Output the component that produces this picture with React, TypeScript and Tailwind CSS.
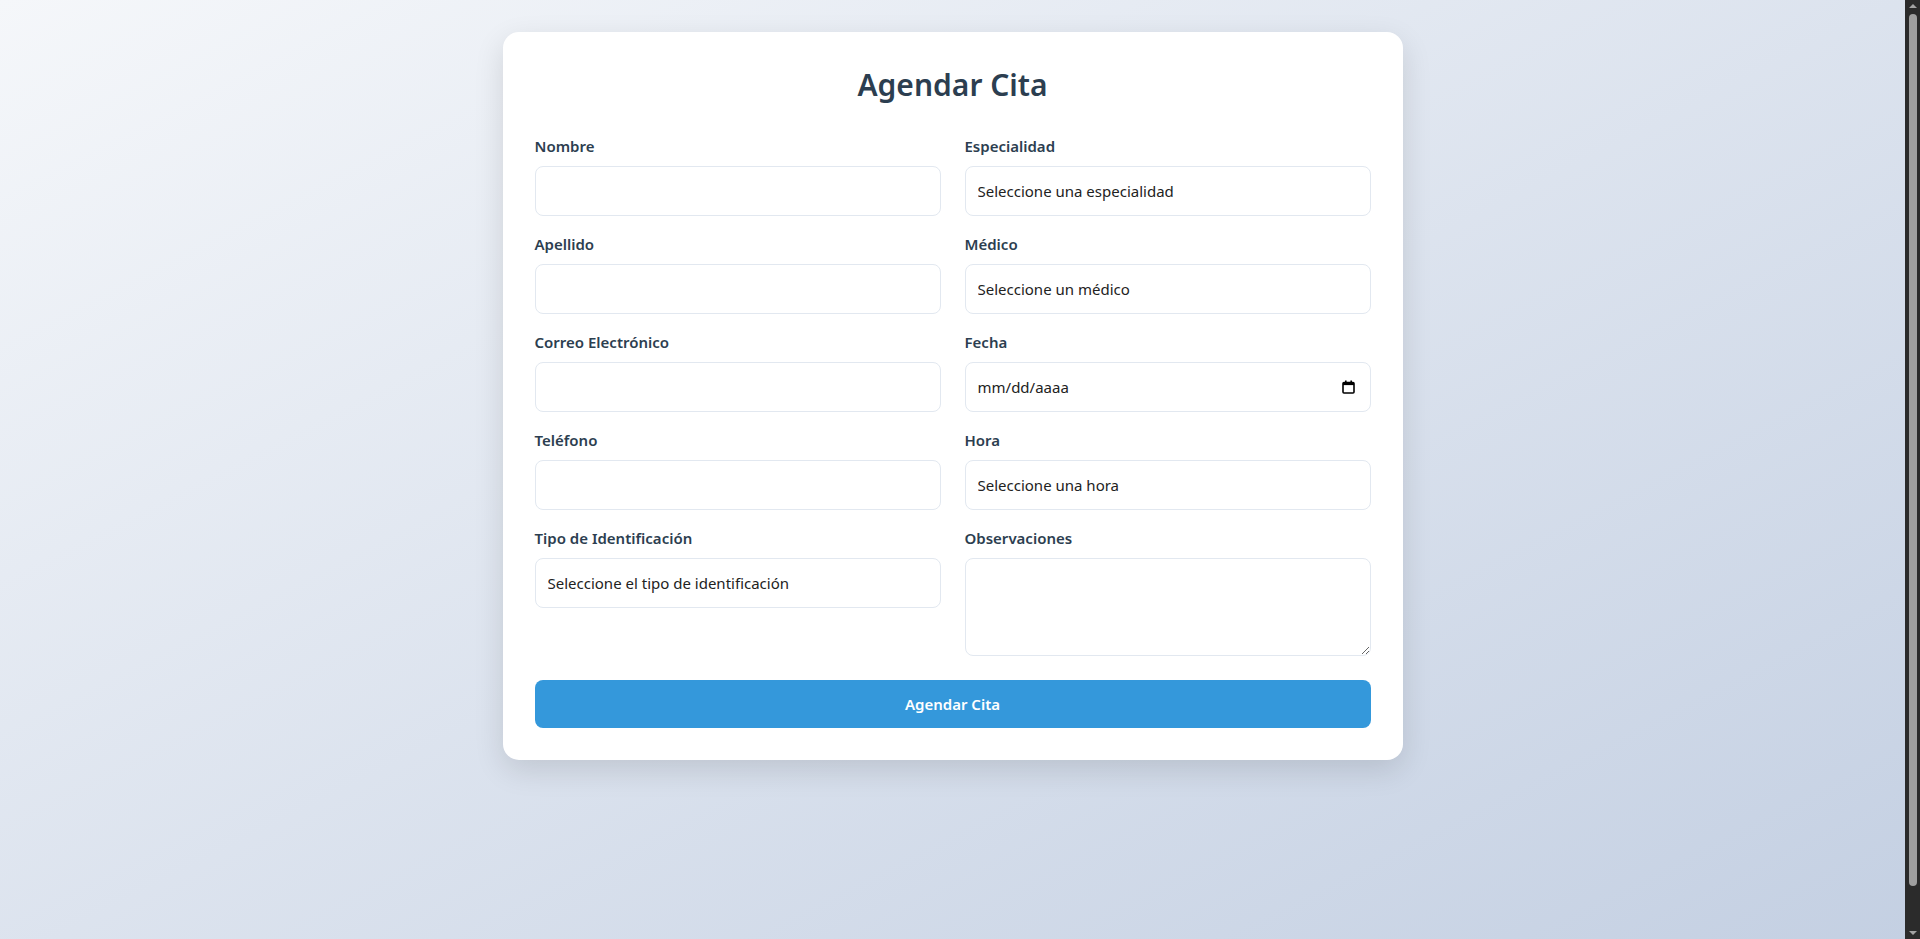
import { useState } from 'react';

const leftFields = [
  { id: 'nombre', label: 'Nombre', type: 'text' },
  { id: 'apellido', label: 'Apellido', type: 'text' },
  { id: 'email', label: 'Correo Electrónico', type: 'email' },
  { id: 'telefono', label: 'Teléfono', type: 'tel' },
];

const inputClass =
  'w-full h-[50px] px-3 rounded-lg border border-[#e2e8f0] bg-white text-[15px] text-[#222] outline-none focus:border-[#3498db]';

const CalendarIcon = () => (
  <svg width="13" height="14" viewBox="0 0 13 14" fill="none" className="text-black">
    <rect x="1" y="2.5" width="11" height="10.5" rx="1" stroke="currentColor" strokeWidth="1.6" />
    <rect x="1" y="2.5" width="11" height="2.6" fill="currentColor" />
    <rect x="3" y="0.5" width="1.6" height="2.5" fill="currentColor" />
    <rect x="8.4" y="0.5" width="1.6" height="2.5" fill="currentColor" />
  </svg>
);

const Field = ({ label, htmlFor, children }: { label: string; htmlFor: string; children: React.ReactNode }) => (
  <div className="flex flex-col">
    <label htmlFor={htmlFor} className="block h-[20px] leading-[20px] mb-[10px] text-[15px] font-semibold text-[#2c3e50]">
      {label}
    </label>
    {children}
  </div>
);

// barra de scroll del navegador (la página es un poco más alta que la ventana)
const FakeScrollbar = () => (
  <div className="fixed top-0 right-0 h-screen w-[15px] bg-[#2b2b2b] flex flex-col items-center">
    <span className="mt-[4px] w-0 h-0 border-l-[4px] border-r-[4px] border-b-[4px] border-l-transparent border-r-transparent border-b-[#a3a3a3]" />
    <div className="mt-[6px] w-[8px] h-[872px] rounded-full bg-[#9f9f9f]" />
    <span className="mt-auto mb-[4px] w-0 h-0 border-l-[4px] border-r-[4px] border-t-[4px] border-l-transparent border-r-transparent border-t-[#a3a3a3]" />
  </div>
);

const App = () => {
  const [obs, setObs] = useState('');

  return (
    <div
      className="min-h-[975px] w-full bg-gradient-to-br from-[#f5f7fa] to-[#c3cfe2] pt-8 pb-8 pr-[15px]"
      style={{ fontFamily: '"Segoe UI", "Noto Sans", "Open Sans", sans-serif' }}
    >
      <div className="mx-auto w-[900px] bg-white rounded-2xl p-8 shadow-[0_10px_30px_rgba(0,0,0,0.12)]">
        <h1 className="h-[42px] leading-[42px] mb-[30px] text-center text-[30px] font-semibold text-[#2c3e50]">
          Agendar Cita
        </h1>
        <form onSubmit={(e) => e.preventDefault()}>
          <div className="grid grid-cols-2 gap-x-6">
            <div className="flex flex-col gap-[18px]">
              {leftFields.map((f) => (
                <Field key={f.id} label={f.label} htmlFor={f.id}>
                  <input id={f.id} type={f.type} className={inputClass} />
                </Field>
              ))}
              <Field label="Tipo de Identificación" htmlFor="tipo">
                <select id="tipo" className={`${inputClass} appearance-none`} defaultValue="">
                  <option value="">Seleccione el tipo de identificación</option>
                  <option value="cc">Cédula de ciudadanía</option>
                  <option value="ti">Tarjeta de identidad</option>
                  <option value="ce">Cédula de extranjería</option>
                </select>
              </Field>
            </div>
            <div className="flex flex-col gap-[18px]">
              <Field label="Especialidad" htmlFor="especialidad">
                <select id="especialidad" className={`${inputClass} appearance-none`} defaultValue="">
                  <option value="">Seleccione una especialidad</option>
                </select>
              </Field>
              <Field label="Médico" htmlFor="medico">
                <select id="medico" className={`${inputClass} appearance-none`} defaultValue="">
                  <option value="">Seleccione un médico</option>
                </select>
              </Field>
              <Field label="Fecha" htmlFor="fecha">
                <div className="relative">
                  <input
                    id="fecha"
                    type="text"
                    placeholder="mm/dd/aaaa"
                    className={`${inputClass} placeholder:text-[#222]`}
                  />
                  <span className="absolute right-[16px] top-[18px] pointer-events-none">
                    <CalendarIcon />
                  </span>
                </div>
              </Field>
              <Field label="Hora" htmlFor="hora">
                <select id="hora" className={`${inputClass} appearance-none`} defaultValue="">
                  <option value="">Seleccione una hora</option>
                </select>
              </Field>
              <Field label="Observaciones" htmlFor="obs">
                <textarea
                  id="obs"
                  value={obs}
                  onChange={(e) => setObs(e.target.value)}
                  className="w-full h-[98px] px-3 py-2 rounded-lg border border-[#e2e8f0] bg-white text-[15px] text-[#222] outline-none focus:border-[#3498db] block"
                />
              </Field>
            </div>
          </div>
          <button
            type="submit"
            className="mt-[24px] w-full h-[48px] rounded-lg bg-[#3498db] text-white text-[15px] font-semibold hover:bg-[#2980b9]"
          >
            Agendar Cita
          </button>
        </form>
      </div>
      <FakeScrollbar />
    </div>
  );
};

export default App;
